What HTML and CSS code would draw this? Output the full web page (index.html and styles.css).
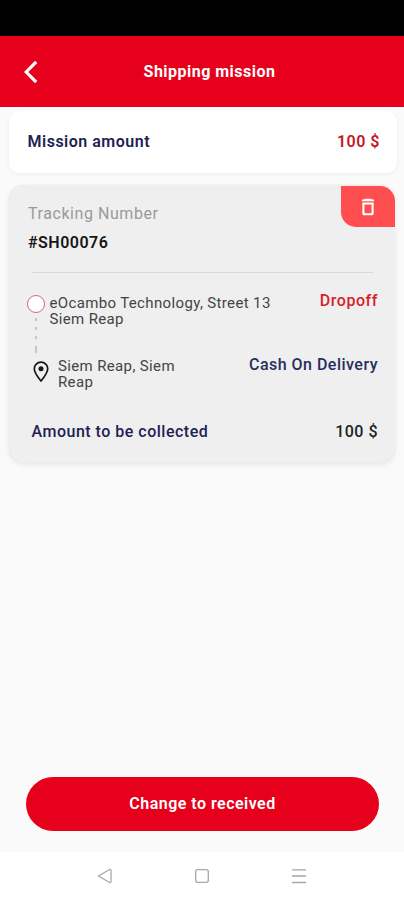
FILE: index.html
```html
<!DOCTYPE html>
<html lang="en">
<head>
<meta charset="utf-8">
<title>Shipping mission</title>
<link rel="stylesheet" href="styles.css">
</head>
<body>
<div class="screen">
  <div class="status"></div>
  <header class="header">
    <svg class="back" width="14" height="24" viewBox="0 0 14 24"><path d="M12.200 1.800 2.200 12l10 10.200" fill="none" stroke="#fff" stroke-width="3.200"/></svg>
    <h1 class="title">Shipping mission</h1>
  </header>
  <main class="content">
    <section class="amount-card">
      <span class="amount-label">Mission amount</span>
      <span class="amount-value">100 $</span>
    </section>
    <section class="shipment">
      <button class="delete" aria-label="Delete">
        <svg width="14" height="18" viewBox="0 0 14 18" fill="none" stroke="#fff"><path d="M1 2.400h12M3.500 1.600h7" stroke-width="1.900"/><path d="M2.400 5.500h9.200v9.700q0 1-1 1H3.400q-1 0-1-1z" stroke-width="2.100"/></svg>
      </button>
      <div class="tracking-label">Tracking Number</div>
      <div class="tracking-number">#SH00076</div>
      <div class="divider"></div>
      <div class="route">
        <div class="rail">
          <span class="ring"></span>
          <svg class="dots" width="4" height="37" viewBox="0 0 4 37" fill="#c6c6c6"><path d="M1 1h2v3H1zM1 10h2v3H1zM1 19h2v3H1zM1 29h2v7H1z"/></svg>
        </div>
        <div class="from">eOcambo Technology, Street 13<br>Siem Reap</div>
        <div class="type">Dropoff</div>
      </div>
      <div class="destination">
        <svg class="pin" width="16" height="22" viewBox="0 0 16 22"><path d="M8 1.200C4.200 1.200 1.300 4.100 1.300 7.800 1.300 12 8 20 8 20s6.700-8 6.700-12.200C14.700 4.100 11.800 1.200 8 1.200z" fill="none" stroke="#171717" stroke-width="1.700"/><circle cx="8" cy="7.800" r="2.500" fill="#171717"/></svg>
        <div class="to">Siem Reap, Siem<br>Reap</div>
        <div class="payment">Cash On Delivery</div>
      </div>
      <div class="collect">
        <span class="collect-label">Amount to be collected</span>
        <span class="collect-value">100 $</span>
      </div>
    </section>
    <button class="submit">Change to received</button>
  </main>
  <nav class="navbar">
    <svg width="16" height="16" viewBox="0 0 16 16"><path d="M1.500 8 12.500 1.500q1.500-.5 1.500 1v11q0 1.500-1.500 1z"/></svg>
    <svg width="16" height="16" viewBox="0 0 16 16"><rect x="1.700" y="1.700" width="12.600" height="12.600" rx="2"/></svg>
    <svg width="16" height="16" viewBox="0 0 16 16"><path d="M1 1.800h14M1 8h14M1 14.500h14"/></svg>
  </nav>
</div>
</body>
</html>
```
FILE: styles.css
```css
* { box-sizing: border-box; }
body { margin: 0; font-family: Roboto, "Liberation Sans", sans-serif; }
button { border: 0; padding: 0; font: inherit; }
svg { display: block; }
.screen { width: 404px; height: 900px; display: flex; flex-direction: column; background: #fafafa; overflow: hidden; }
.status { height: 36px; background: #000; flex: none; }
.header { height: 71px; flex: none; background: #e6001b; position: relative; display: flex; align-items: center; justify-content: center; padding-left: 15px; }
.back { position: absolute; left: 24px; top: 24px; }
.title { margin: 0; font-size: 16px; line-height: 20px; font-weight: 700; color: #fff; letter-spacing: .48px; }
.content { flex: 1; display: flex; flex-direction: column; padding: 4px 7px 21.500px 9px; }
.amount-card { height: 62px; border-radius: 11px; background: #fff; box-shadow: 0 1px 4px rgba(0,0,0,.06); display: flex; justify-content: space-between; align-items: center; padding: 0 17px 1px 18.500px; font-size: 16px; font-weight: 600; letter-spacing: .5px; }
.amount-label { color: #1d2252; }
.amount-value { color: #c41827; }
.shipment { position: relative; height: 278px; margin: 12px 2px 0 0; border-radius: 15px; background: #efefef; box-shadow: 0 2px 6px rgba(0,0,0,.07), 0 0 1px rgba(0,0,0,.12); padding: 19px 17px 0 19px; }
.delete { position: absolute; right: 0; top: 1px; width: 54px; height: 41px; border-radius: 0 15px 0 15px; background: #ff4e50; display: flex; align-items: center; justify-content: center; }
.tracking-label { font-size: 16px; line-height: 20px; color: #999; letter-spacing: .56px; }
.tracking-number { margin-top: 9px; font-size: 16px; line-height: 20px; font-weight: 600; color: #161616; letter-spacing: .5px; }
.divider { margin: 19px 5px 0 4px; height: 1px; background: #d9d9d9; }
.route { display: flex; margin-top: 22px; height: 62px; }
.rail { width: 21.500px; display: flex; flex-direction: column; }
.ring { width: 18px; height: 18px; border: 1.500px solid #e6607a; border-radius: 50%; background: #fff; flex: none; margin: 0 0 0 -1px; }
.dots { margin: 4px 0 0 6px; }
.from, .to { font-size: 15px; line-height: 16px; color: #444; letter-spacing: .36px; white-space: nowrap; }
.type { margin: -4px 0 0 auto; font-size: 16px; line-height: 20px; font-weight: 500; color: #d61f2d; letter-spacing: .55px; }
.destination { display: flex; height: 65px; }
.pin { margin: 4px 9px 0 5px; }
.to { padding-top: 1px; }
.payment { margin: -2px 0 0 auto; font-size: 16px; line-height: 20px; font-weight: 500; color: #282e5c; letter-spacing: .48px; }
.collect { display: flex; justify-content: space-between; padding-left: 3.500px; font-size: 16px; line-height: 20px; font-weight: 500; letter-spacing: .5px; }
.collect-label { color: #1d2252; }
.collect-value { color: #222; }
.submit { width: 353px; height: 54px; margin: auto 0 0 17px; border-radius: 27px; background: #e6001b; color: #fff; font-size: 16px; font-weight: 600; letter-spacing: .48px; }
.navbar { height: 48px; flex: none; background: #fff; display: flex; justify-content: center; gap: 81px; padding-top: 16px; }
.navbar svg { fill: none; stroke: #a7a7a7; stroke-width: 1.300; }
```
